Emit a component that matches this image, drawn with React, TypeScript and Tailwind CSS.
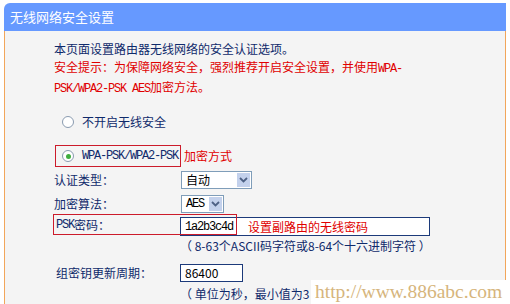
import React from 'react';

const CJK = "font-['Noto_Sans_CJK_SC',sans-serif]";
const MONO = "font-['Liberation_Mono',monospace] text-[12px] tracking-[-1.2px]";

const Radio = ({ checked }: { checked?: boolean }) => (
  <span className="flex h-[12px] w-[12px] items-center justify-center rounded-full border border-[#8a9bb0] bg-white">
    {checked && <span className="h-[5px] w-[5px] rounded-full bg-[#3fae3f]" />}
  </span>
);

const Select = ({ value, width, mono }: { value: string; width: string; mono?: boolean }) => (
  <div className={`flex h-[18px] items-stretch border border-[#7f9db9] bg-white ${width}`}>
    <span className={`flex flex-1 items-center pl-[4px] text-black ${mono ? MONO : 'text-[12px]'}`}>{value}</span>
    <span className="flex w-[15px] items-center justify-center border border-white bg-[#c3d1ec]">
      <svg width="9" height="6" viewBox="0 0 9 6">
        <path d="M1 1 L4.5 4.5 L8 1" fill="none" stroke="#4d6185" strokeWidth="1.8" />
      </svg>
    </span>
  </div>
);

export default function App() {
  return (
    <div className={`relative h-[304px] w-[510px] overflow-hidden bg-white pl-[4px] pt-[3px] ${CJK}`}>
      <div className="w-[502px]">
        <div className="flex h-[28px] items-center rounded-tl-[6px] bg-[#6699ff] pl-[6px] text-[13px] text-white">
          无线网络安全设置
        </div>
        <div className="h-[273px] border-x border-[#f2a65a] bg-[#f4f4f4] pl-[49px] text-[12px] text-[#0f2a6b]">
          <div className="pt-[9px] leading-[18px]">
            <div>本页面设置路由器无线网络的安全认证选项。</div>
            <div className="text-[#e00000]">
              安全提示：为保障网络安全，强烈推荐开启安全设置，并使用<span className={MONO}>WPA-</span>
            </div>
            <div className="text-[#e00000]">
              <span className={MONO}>PSK/WPA2-PSK AES</span>加密方法。
            </div>
          </div>

          <div className="mt-[14px] flex h-[20px] items-center pl-[8px]">
            <Radio />
            <span className="ml-[8px]">不开启无线安全</span>
          </div>

          <div className="mt-[13px] flex items-center">
            <div className="ml-[1px] flex h-[22px] items-center border border-[#cc1b2b] pl-[6px] pr-[2px]">
              <Radio checked />
              <span className={`ml-[8px] ${MONO}`}>WPA-PSK/WPA2-PSK</span>
            </div>
            <span className="ml-[3px] text-[#e00000]">加密方式</span>
          </div>

          <div className="mt-[4px] flex h-[18px] items-center">
            <span className="w-[127px]">认证类型：</span>
            <Select value="自动" width="w-[71px]" />
          </div>

          <div className="mt-[6px] flex h-[18px] items-center">
            <span className="w-[127px]">加密算法：</span>
            <Select value="AES" width="w-[43px]" mono />
          </div>

          <div className="relative mt-[1px] flex h-[23px] items-start">
            <span className="flex h-[21px] w-[126px] items-center pl-[2px]">
              <span className={MONO}>PSK</span>密码：
            </span>
            <div className="mt-[3px] flex h-[19px] w-[250px] items-center border border-[#1c3a7a] bg-white">
              <span className={`pl-[4px] text-black ${MONO}`}>1a2b3c4d</span>
              <span className="ml-[15px] text-[12px] text-[#e00000]">设置副路由的无线密码</span>
            </div>
            <div className="pointer-events-none absolute left-[-1px] top-0 h-[21px] w-[184px] border border-[#cc1b2b]" />
          </div>

          <div className="flex h-[18px] items-center pl-[126px]">
            （ 8-63个ASCII码字符或8-64个十六进制字符 ）
          </div>

          <div className="mt-[9px] flex h-[18px] items-center">
            <span className="w-[126px] pl-[2px]">组密钥更新周期：</span>
            <div className="flex h-[18px] w-[63px] items-center border border-[#1c3a7a] bg-white pl-[4px] text-[12px] text-black">
              86400
            </div>
          </div>

          <div className="mt-[3px] flex h-[18px] items-center whitespace-nowrap pl-[126px]">
            （ 单位为秒，最小值为3
          </div>
        </div>
      </div>

      <div className="absolute left-[311px] top-[280px] flex h-[24px] w-[199px] items-center bg-white pl-[4px] font-['Liberation_Serif',serif] text-[19.5px] text-[#d6b57c]">
        http://www.886abc.com
      </div>
    </div>
  );
}
